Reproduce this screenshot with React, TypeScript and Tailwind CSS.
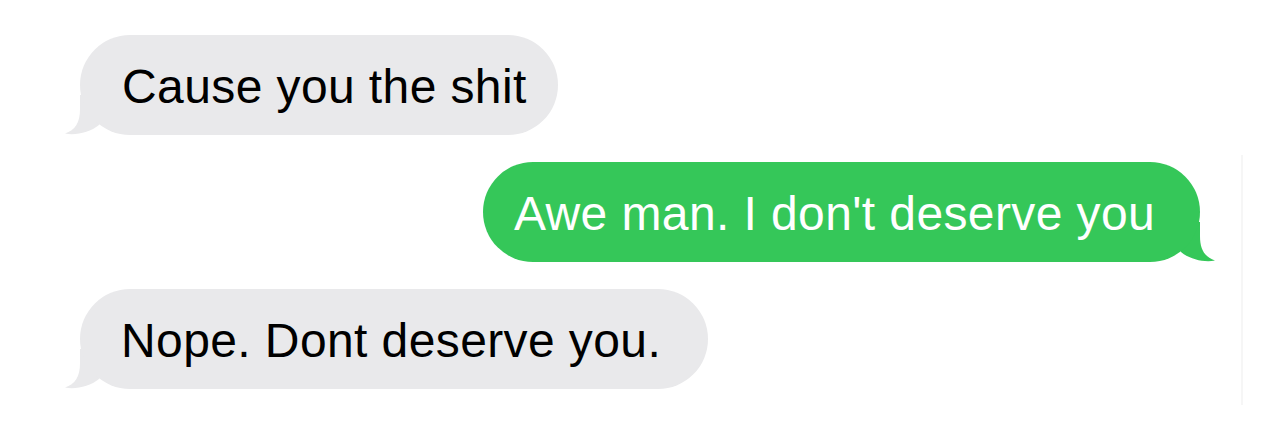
const font = { fontFamily: '"Liberation Sans", Arial, Helvetica, sans-serif', letterSpacing: '0.4px' };

function TailLeft({ color }: { color: string }) {
  return (
    <svg
      className="absolute bottom-0 left-[-16px] w-[46px] h-[40px]"
      viewBox="0 0 46 40"
      fill={color}
    >
      <path d="M16 0 L16 14 C16 28 11 35 1 38.6 C12 40.6 26 37.5 35 30 L44 16 L44 0 Z" />
    </svg>
  );
}

function TailRight({ color }: { color: string }) {
  return (
    <svg
      className="absolute bottom-0 right-[-16px] w-[46px] h-[40px]"
      viewBox="0 0 46 40"
      fill={color}
    >
      <path d="M30 0 L30 14 C30 28 35 35 45 38.6 C34 40.6 20 37.5 11 30 L2 16 L2 0 Z" />
    </svg>
  );
}

function Received({ text, width, pl }: { text: string; width: string; pl: string }) {
  return (
    <div className={`relative h-[100px] ${width}`}>
      <TailLeft color="#e9e9eb" />
      <div
        className={`relative h-full rounded-[50px] bg-[#e9e9eb] flex items-center pt-[4px] ${pl}`}
      >
        <span className="text-[48px] leading-[48px] text-black whitespace-nowrap" style={font}>
          {text}
        </span>
      </div>
    </div>
  );
}

function Sent({ text, width, pl }: { text: string; width: string; pl: string }) {
  return (
    <div className={`relative h-[100px] ${width}`}>
      <TailRight color="#35c759" />
      <div
        className={`relative h-full rounded-[50px] bg-[#35c759] flex items-center pt-[4px] ${pl}`}
      >
        <span className="text-[48px] leading-[48px] text-white whitespace-nowrap" style={font}>
          {text}
        </span>
      </div>
    </div>
  );
}

export default function App() {
  return (
    <div className="relative w-[1284px] h-[427px] bg-white overflow-hidden">
      {/* faint divider from the original screenshot */}
      <div className="absolute left-[1241px] top-[155px] w-[2px] h-[250px] bg-[#f6f6f6]" />

      <div className="flex flex-col gap-[27px] pt-[35px] pl-[80px] pr-[84px]">
        <div className="flex justify-start">
          <Received text="Cause you the shit" width="w-[478px]" pl="pl-[42px]" />
        </div>
        <div className="flex justify-end">
          <Sent text="Awe man. I don't deserve you" width="w-[717px]" pl="pl-[31px]" />
        </div>
        <div className="flex justify-start">
          <Received text="Nope. Dont deserve you." width="w-[628px]" pl="pl-[41px]" />
        </div>
      </div>
    </div>
  );
}
